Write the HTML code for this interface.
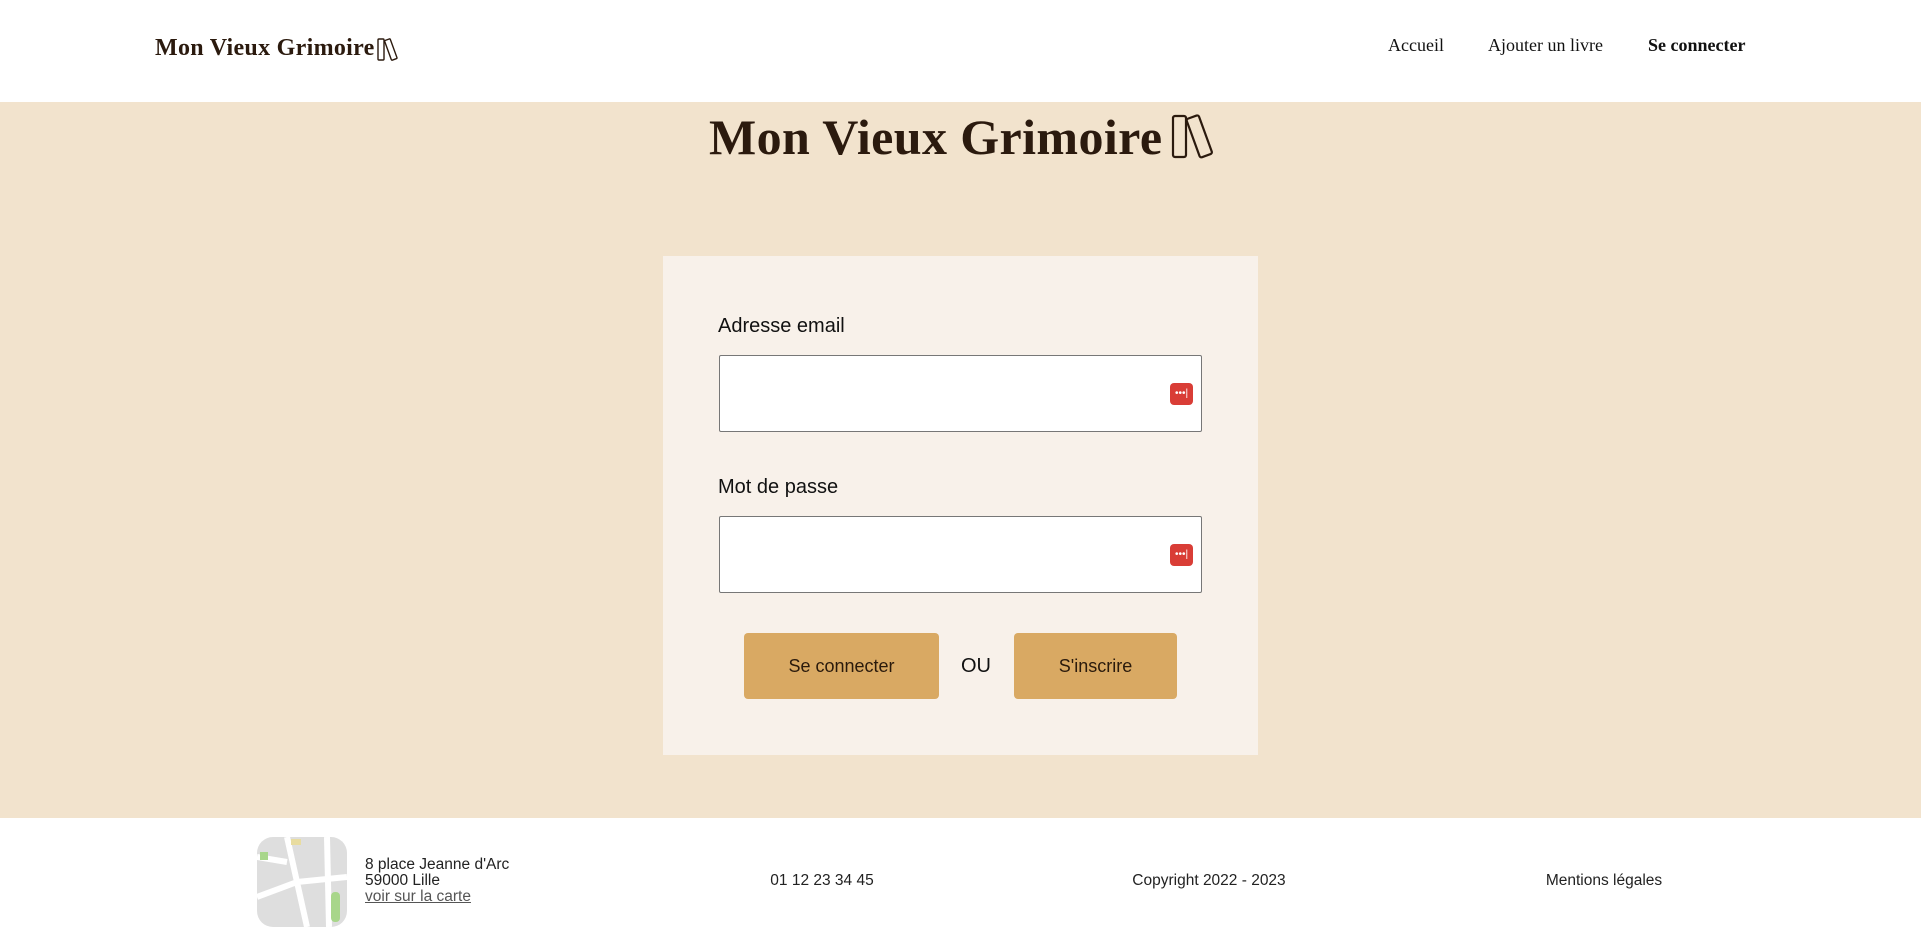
<!DOCTYPE html>
<html><head><meta charset="utf-8"><style>
*{margin:0;padding:0;box-sizing:border-box}
body{width:1921px;height:943px;overflow:hidden;background:#fff;font-family:"Liberation Sans",sans-serif;position:relative;color:#111}
.abs{position:absolute}
.logo{font-family:"Liberation Serif",serif;font-weight:bold;color:#2b1a0e;white-space:nowrap}
.nav{font-family:"Liberation Serif",serif;font-size:18px;top:35px;color:#111}
.main{top:102px;left:0;width:1921px;height:716px;background:#f2e3cd}
.card{left:663px;top:256px;width:595px;height:499px;background:#f8f1ea}
.lbl{font-size:20px;color:#111}
.inp{left:719px;width:483px;height:77px;background:#fff;border:1px solid #777;border-radius:2px}
.pm{width:23px;height:22px;background:#d93d36;border-radius:4px;color:#fff;font-size:10px;line-height:22px;text-align:center;letter-spacing:0px}
.btn{top:633px;height:66px;background:#d9a963;border-radius:4px;font-size:18px;color:#2a1a0c;text-align:center;line-height:66px}
.ft{font-size:15.5px;color:#222}
</style></head><body>
<div class="abs logo" style="left:155px;top:35px;font-size:24px;letter-spacing:0.3px">Mon Vieux Grimoire</div>
<svg class="abs" style="left:377px;top:38px" width="22" height="24" viewBox="0 0 22 24"><rect x="1" y="1" width="6" height="21" rx="1" fill="none" stroke="#2b1a0e" stroke-width="1.4"/><rect x="11" y="1" width="6" height="21" rx="1" fill="none" stroke="#2b1a0e" stroke-width="1.4" transform="rotate(-20 14 12)"/></svg>
<div class="abs nav" style="left:1388px">Accueil</div>
<div class="abs nav" style="left:1488px">Ajouter un livre</div>
<div class="abs nav" style="left:1648px;font-weight:bold">Se connecter</div>
<div class="abs main"></div>
<div class="abs logo" style="left:709px;top:108px;font-size:50px;letter-spacing:0.4px">Mon Vieux Grimoire</div>
<svg class="abs" style="left:1170px;top:113px" width="44" height="48" viewBox="0 0 44 48"><rect x="3" y="3" width="13" height="41" rx="2" fill="none" stroke="#2b1a0e" stroke-width="2.2"/><rect x="23" y="3" width="13" height="41" rx="2" fill="none" stroke="#2b1a0e" stroke-width="2.2" transform="rotate(-20 29 24)"/></svg>
<div class="abs card"></div>
<div class="abs lbl" style="left:718px;top:315px">Adresse email</div>
<div class="abs inp" style="top:355px"></div>
<div class="abs pm" style="left:1170px;top:383px">•••|</div>
<div class="abs lbl" style="left:718px;top:476px">Mot de passe</div>
<div class="abs inp" style="top:516px"></div>
<div class="abs pm" style="left:1170px;top:544px">•••|</div>
<div class="abs btn" style="left:744px;width:195px">Se connecter</div>
<div class="abs" style="left:958px;top:655px;width:36px;text-align:center;font-size:20px">OU</div>
<div class="abs btn" style="left:1014px;width:163px">S'inscrire</div>
<svg class="abs" style="left:257px;top:837px" width="90" height="90" viewBox="0 0 90 90"><defs><clipPath id="c"><rect width="90" height="90" rx="16"/></clipPath></defs><g clip-path="url(#c)"><rect width="90" height="90" fill="#dedede"/><path d="M30 0 L50 90 M0 60 L40 45 M70 0 L72 90 M40 45 L90 40 M0 20 L30 25" stroke="#fff" stroke-width="6"/><rect x="3" y="15" width="8" height="8" fill="#a8d68a"/><rect x="74" y="55" width="9" height="30" rx="4" fill="#a8d68a"/><rect x="34" y="2" width="10" height="6" fill="#e8dca0"/></g></svg>
<div class="abs ft" style="left:365px;top:857px;line-height:16px">8 place Jeanne d'Arc<br>59000 Lille<br><span style="text-decoration:underline;color:#555">voir sur la carte</span></div>
<div class="abs ft" style="left:722px;width:200px;text-align:center;top:872px">01 12 23 34 45</div>
<div class="abs ft" style="left:1059px;width:300px;text-align:center;top:872px">Copyright 2022 - 2023</div>
<div class="abs ft" style="left:1454px;width:300px;text-align:center;top:872px">Mentions légales</div>
</body></html>
